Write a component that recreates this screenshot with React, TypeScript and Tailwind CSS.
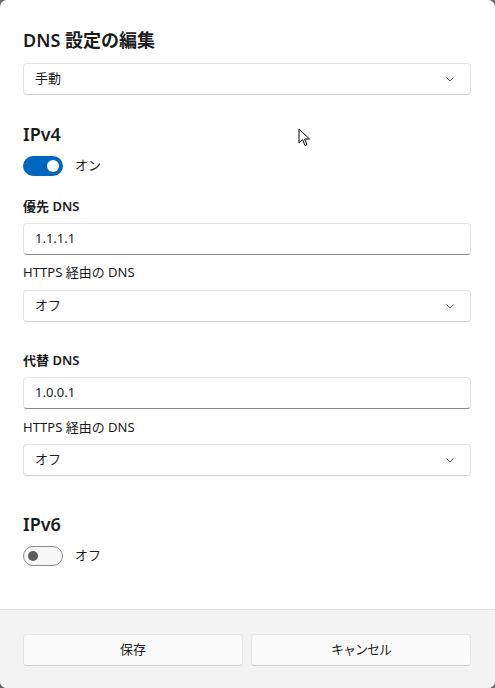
import React from "react";

const Chevron = () => (
  <svg width="12" height="12" viewBox="0 0 12 12" fill="none">
    <path d="M2.5 4.5 L6 8 L9.5 4.5" stroke="#5f5f5f" strokeWidth="1" />
  </svg>
);

const Select = ({ value }: { value: string }) => (
  <div className="h-[32px] w-full rounded-[4px] border border-[#e5e5e5] border-b-[#d0d0d0] bg-white flex items-center justify-between pl-[11px] pr-[14px] text-[13px] text-[#1b1b1b]">
    <span>{value}</span>
    <Chevron />
  </div>
);

const Input = ({ value }: { value: string }) => (
  <div className="h-[32px] w-full rounded-[4px] border border-[#e5e5e5] border-b-[#8a8a8a] bg-white flex items-center pl-[11px] text-[13px] text-[#1b1b1b]">
    {value}
  </div>
);

const Cursor = () => (
  <svg className="absolute left-[298px] top-[128px]" width="14" height="20" viewBox="0 0 14 20">
    <path d="M1 1 L1 15 L4.5 11.5 L7 17.5 L9 16.6 L6.6 11 L11.5 11 Z" fill="white" stroke="black" strokeWidth="1" strokeLinejoin="round" />
  </svg>
);

export default function App() {
  return (
    <div
      className="relative w-[495px] h-[688px] bg-[#6b6b6b] overflow-hidden"
      style={{ fontFamily: '"Noto Sans", "Noto Sans CJK JP", sans-serif' }}
    >
      <div className="w-full h-full bg-white rounded-[7px] flex flex-col overflow-hidden">
        <div className="flex-1 px-[23px] pt-[26px]">
          <div className="text-[18px] font-semibold text-[#1b1b1b] leading-[28px]">DNS 設定の編集</div>
          <div className="mt-[9px] w-[448px]">
            <Select value="手動" />
          </div>

          <div className="mt-[25px] text-[18px] font-semibold text-[#1b1b1b] leading-[28px]">IPv4</div>
          <div className="mt-[8px] flex items-center gap-[12px]">
            <div className="w-[40px] h-[20px] rounded-full bg-[#0067c0] flex items-center justify-end pr-[4px]">
              <div className="w-[12px] h-[12px] rounded-full bg-white" />
            </div>
            <span className="text-[13px] text-[#1b1b1b]">オン</span>
          </div>

          <div className="mt-[20px] text-[13px] font-semibold text-[#1b1b1b] leading-[20px]">優先 DNS</div>
          <div className="mt-[7px] w-[448px]">
            <Input value="1.1.1.1" />
          </div>
          <div className="mt-[7px] text-[13px] text-[#1b1b1b] leading-[20px]">HTTPS 経由の DNS</div>
          <div className="mt-[8px] w-[448px]">
            <Select value="オフ" />
          </div>

          <div className="mt-[28px] text-[13px] font-semibold text-[#1b1b1b] leading-[20px]">代替 DNS</div>
          <div className="mt-[7px] w-[448px]">
            <Input value="1.0.0.1" />
          </div>
          <div className="mt-[8px] text-[13px] text-[#1b1b1b] leading-[20px]">HTTPS 経由の DNS</div>
          <div className="mt-[7px] w-[448px]">
            <Select value="オフ" />
          </div>

          <div className="mt-[34px] text-[18px] font-semibold text-[#1b1b1b] leading-[28px]">IPv6</div>
          <div className="mt-[8px] flex items-center gap-[12px]">
            <div className="w-[40px] h-[20px] rounded-full border border-[#8a8a8a] bg-[#f6f6f6] flex items-center pl-[4px]">
              <div className="w-[10px] h-[10px] rounded-full bg-[#5d5d5d]" />
            </div>
            <span className="text-[13px] text-[#1b1b1b]">オフ</span>
          </div>
        </div>

        <div className="h-[79px] bg-[#f3f3f3] border-t border-[#e0e0e0] px-[23px] pt-[24px] flex gap-[8px]">
          <button className="w-[220px] h-[32px] rounded-[4px] bg-[#fbfbfb] border border-[#e5e5e5] border-b-[#d0d0d0] text-[13px] text-[#1b1b1b]">保存</button>
          <button className="w-[220px] h-[32px] rounded-[4px] bg-[#fbfbfb] border border-[#e5e5e5] border-b-[#d0d0d0] text-[13px] tracking-[-1px] text-[#1b1b1b]">キャンセル</button>
        </div>
      </div>
      <Cursor />
    </div>
  );
}
